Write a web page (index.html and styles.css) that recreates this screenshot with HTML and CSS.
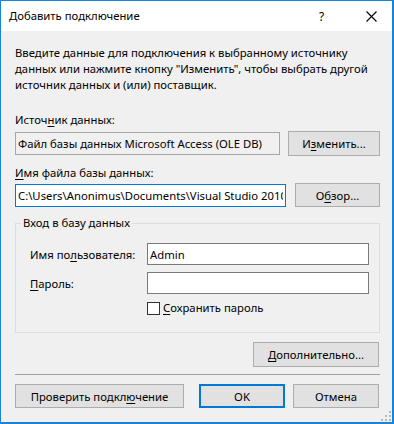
FILE: index.html
```html
<!DOCTYPE html>
<html lang="ru">

<head>
    <meta charset="UTF-8">
    <title>Добавить подключение</title>
    <link rel="stylesheet" href="styles.css">
</head>

<body>

    <div class="dialog">
        <!-- Title Bar -->
        <div class="titlebar">
            <span class="title">Добавить подключение</span>
            <span class="help">?</span>
            <svg class="close" width="11" height="11" viewBox="0 0 11 11">
                <path d="M0.5 0.5 L10.5 10.5 M10.5 0.5 L0.5 10.5" stroke="#000" stroke-width="1.1" fill="none" />
            </svg>
        </div>

        <div class="content">
            <p class="intro">Введите данные для подключения к выбранному источнику<br>данных или нажмите кнопку "Изменить", чтобы выбрать другой<br>источник данных и (или) поставщик.</p>

            <!-- Data Source -->
            <label class="field-label first">Источ<u>н</u>ик данных:</label>
            <div class="row">
                <div class="textbox readonly source">Файл базы данных Microsoft Access (OLE DB)</div>
                <button type="button" class="btn btn-change">И<u>з</u>менить...</button>
            </div>

            <!-- Database File -->
            <label class="field-label"><u>И</u>мя файла базы данных:</label>
            <div class="row">
                <input type="text" class="textbox focused file" value="C:\Users\Anonimus\Documents\Visual Studio 2010\Projects\db.mdb">
                <button type="button" class="btn btn-browse">О<u>б</u>зор...</button>
            </div>

            <!-- Login Group -->
            <fieldset class="login">
                <legend>Вход в базу данных</legend>
                <div class="login-row">
                    <label class="login-label">Имя по<u>л</u>ьзователя:</label>
                    <input type="text" class="textbox login-input" value="Admin">
                </div>
                <div class="login-row">
                    <label class="login-label"><u>П</u>ароль:</label>
                    <input type="password" class="textbox login-input">
                </div>
                <label class="check-row">
                    <span class="checkbox"></span>
                    <span><u>С</u>охранить пароль</span>
                </label>
            </fieldset>

            <div class="advanced-row">
                <button type="button" class="btn btn-advanced"><u>Д</u>ополнительно...</button>
            </div>

            <div class="separator"></div>

            <!-- Footer Buttons -->
            <div class="footer">
                <button type="button" class="btn btn-test">Проверить подкл<u>ю</u>чение</button>
                <button type="button" class="btn btn-ok">OK</button>
                <button type="button" class="btn btn-cancel">Отмена</button>
            </div>
        </div>

        <!-- Size Grip -->
        <svg class="grip" width="10" height="10" viewBox="0 0 10 10">
            <rect x="8" y="0" width="2" height="2" fill="#b8b8b8" />
            <rect x="4" y="4" width="2" height="2" fill="#b8b8b8" />
            <rect x="8" y="4" width="2" height="2" fill="#b8b8b8" />
            <rect x="0" y="8" width="2" height="2" fill="#b8b8b8" />
            <rect x="4" y="8" width="2" height="2" fill="#b8b8b8" />
            <rect x="8" y="8" width="2" height="2" fill="#b8b8b8" />
        </svg>
    </div>

</body>

</html>
```

FILE: styles.css
```css
/* General Styles */
body {
    margin: 0;
    font-family: 'Noto Sans', 'Open Sans', sans-serif;
    font-size: 11.3px;
    color: #000;
    background: #f0f0f0;
}

u {
    text-decoration: underline;
    text-underline-offset: 2px;
}

/* Dialog Window */
.dialog {
    position: relative;
    width: 394px;
    height: 424px;
    box-sizing: border-box;
    border: 1px solid #1883d7;
    border-right-width: 2px;
    border-bottom-width: 2px;
    background: #f0f0f0;
}

/* Title Bar */
.titlebar {
    height: 30px;
    background: #fff;
    display: flex;
    align-items: center;
    padding-left: 8px;
}

.title {
    flex: 1;
    line-height: 16px;
}

.help {
    width: 10px;
    font-size: 12px;
    margin-right: 37px;
}

.close {
    margin-right: 15px;
}

/* Content */
.content {
    padding: 14px 12px 0 14px;
}

.intro {
    margin: 0;
    line-height: 16px;
    white-space: nowrap;
}

.field-label {
    display: block;
    line-height: 16px;
    margin-top: 9px;
}

.field-label.first {
    margin-top: 19px;
}

.row {
    display: flex;
    align-items: center;
    justify-content: space-between;
    margin-top: 2px;
    width: 365px;
}

.field-label.first + .row {
    margin-top: 3px;
}

/* Text Boxes */
.textbox {
    box-sizing: border-box;
    height: 23px;
    border: 1px solid #7a7a7a;
    background: #fff;
    font-family: inherit;
    font-size: 11.3px;
    color: #000;
    padding: 0 2px;
    margin: 0;
    outline: none;
}

.textbox.readonly {
    background: #f0f0f0;
    border-color: #a6a6a6;
    line-height: 21px;
    white-space: nowrap;
    overflow: hidden;
}

.source {
    width: 265px;
}

.file {
    width: 271px;
    border-color: #0078d7;
}

/* Buttons */
.btn {
    box-sizing: border-box;
    height: 25px;
    margin: 0;
    padding: 0;
    border: 1px solid #adadad;
    background: #e1e1e1;
    font-family: inherit;
    font-size: 11.3px;
    color: #000;
}

.btn-change {
    width: 92px;
}

.btn-browse {
    width: 85px;
    height: 24px;
}

/* Login Group Box */
.login {
    width: 365px;
    box-sizing: border-box;
    margin: 8px 0 0 0;
    padding: 12px 10px 16px 14px;
    border: 1px solid #dcdcdc;
}

.login legend {
    margin-left: -9px;
    padding: 0 2px;
    line-height: 16px;
}

.login-row {
    display: flex;
    align-items: center;
    margin-bottom: 7px;
}

.login-label {
    width: 117px;
}

.login-input {
    width: 222px;
    height: 22px;
}

.check-row {
    display: flex;
    align-items: center;
    margin-left: 117px;
    margin-top: -1px;
    line-height: 16px;
}

.checkbox {
    width: 13px;
    height: 13px;
    box-sizing: border-box;
    border: 1px solid #333;
    background: #fff;
    margin-right: 3px;
}

/* Advanced */
.advanced-row {
    display: flex;
    justify-content: flex-end;
    width: 364px;
    margin-top: 9px;
}

.btn-advanced {
    width: 126px;
}

.separator {
    width: 365px;
    height: 1px;
    background: #a0a0a0;
    margin-top: 7px;
}

/* Footer */
.footer {
    display: flex;
    margin-top: 9px;
}

.footer .btn {
    height: 24px;
}

.btn-test {
    width: 169px;
}

.btn-ok {
    width: 86px;
    margin-left: 15px;
    border: 2px solid #0078d7;
}

.btn-cancel {
    width: 86px;
    margin-left: 8px;
}

/* Size Grip */
.grip {
    position: absolute;
    right: 1px;
    bottom: 1px;
}
```
